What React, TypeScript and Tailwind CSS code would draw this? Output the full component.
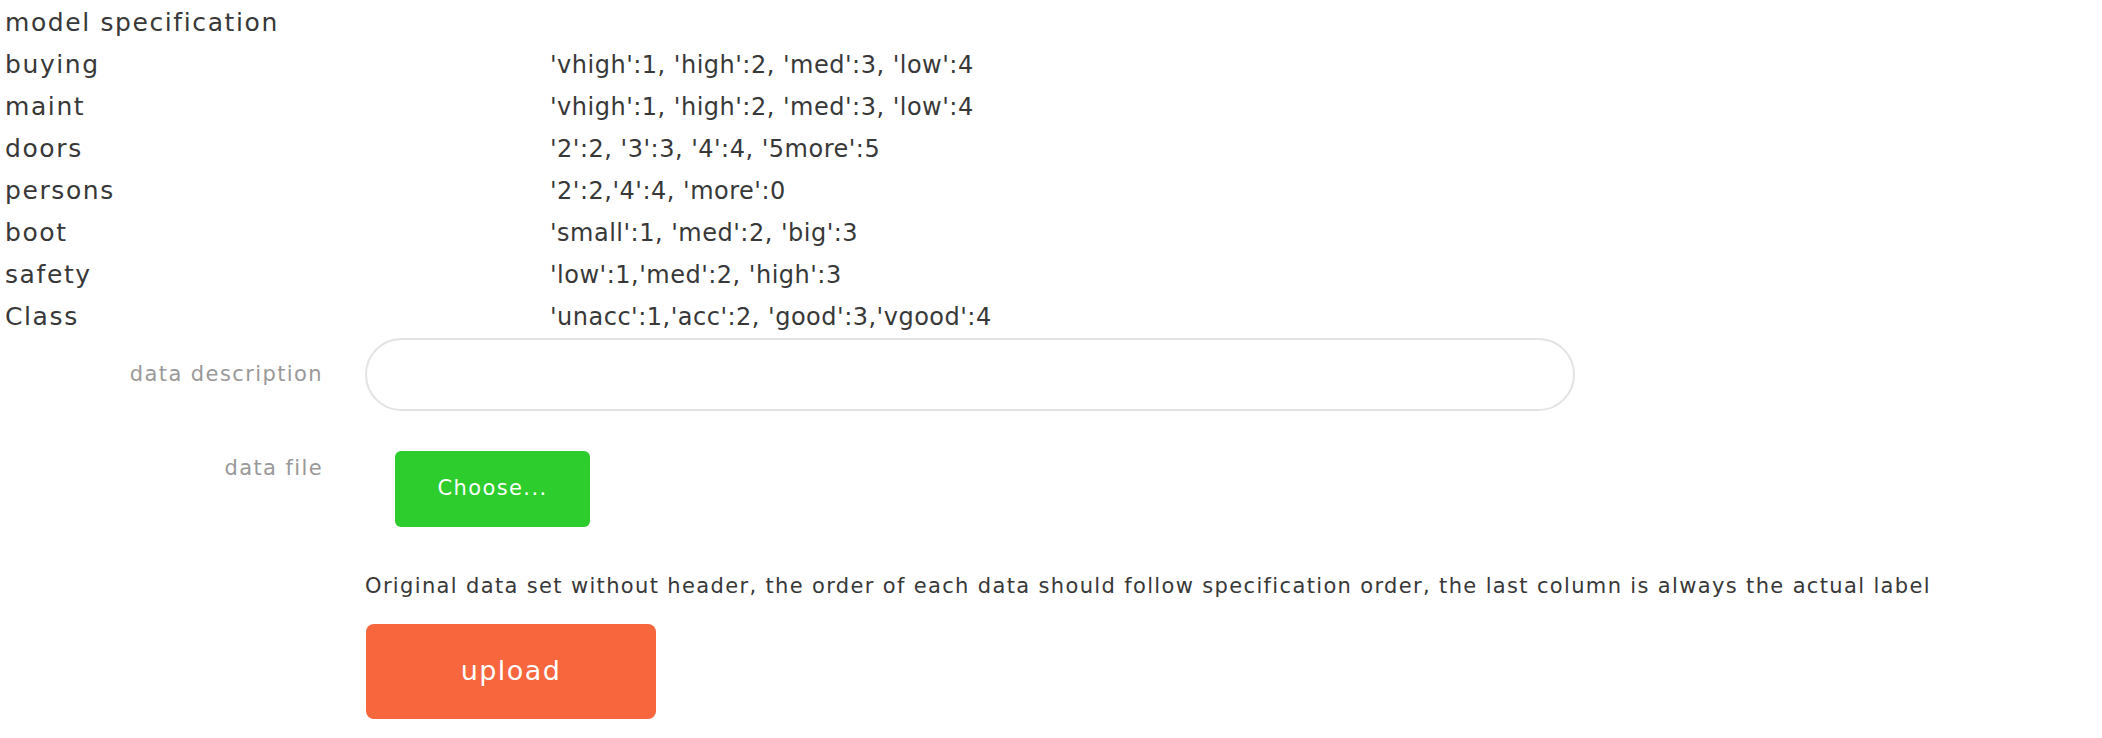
const specRows: [string, string][] = [
  ['buying', "'vhigh':1, 'high':2, 'med':3, 'low':4"],
  ['maint', "'vhigh':1, 'high':2, 'med':3, 'low':4"],
  ['doors', "'2':2, '3':3, '4':4, '5more':5"],
  ['persons', "'2':2,'4':4, 'more':0"],
  ['boot', "'small':1, 'med':2, 'big':3"],
  ['safety', "'low':1,'med':2, 'high':3"],
  ['Class', "'unacc':1,'acc':2, 'good':3,'vgood':4"],
];

const App = () => {
  return (
    <div className="min-h-screen bg-white text-[#383838] font-['DejaVu_Sans',sans-serif]">
      <div className="pt-[2px] pl-[5px] text-[24px] tracking-[0.5px]">
        <div className="h-[42px] flex items-center text-[25px] tracking-[1.6px]">model specification</div>
        {specRows.map(([name, values]) => (
          <div key={name} className="h-[42px] flex items-center">
            <div className="w-[545px] text-[25px] tracking-[1.6px]">{name}</div>
            <div>{values}</div>
          </div>
        ))}
      </div>

      <form className="flex flex-col text-[21px] tracking-[1.4px]" onSubmit={(e) => e.preventDefault()}>
        <div className="flex items-center">
          <label className="w-[323px] text-right text-[#999]">data description</label>
          <input
            type="text"
            className="ml-[42px] w-[1210px] h-[73px] rounded-full border-2 border-[#e3e3e3] px-6 outline-none"
          />
        </div>

        <div className="flex items-start mt-[40px]">
          <label className="w-[323px] text-right text-[#999] pt-[2px]">data file</label>
          <label className="ml-[72px] w-[195px] h-[76px] flex items-center justify-center rounded-md bg-[#2ccd2c] text-white cursor-pointer">
            Choose...
            <input type="file" className="hidden" />
          </label>
        </div>

        <div className="pl-[365px] mt-[45px]">
          <p className="leading-[28px] tracking-[1.35px]">
            Original data set without header, the order of each data should follow specification order, the last column is always the actual label
          </p>
          <button
            type="submit"
            className="mt-[24px] ml-[1px] w-[290px] h-[95px] rounded-lg bg-[#f7663c] text-white text-[27px]"
          >
            upload
          </button>
        </div>
      </form>
    </div>
  );
};

export default App;
